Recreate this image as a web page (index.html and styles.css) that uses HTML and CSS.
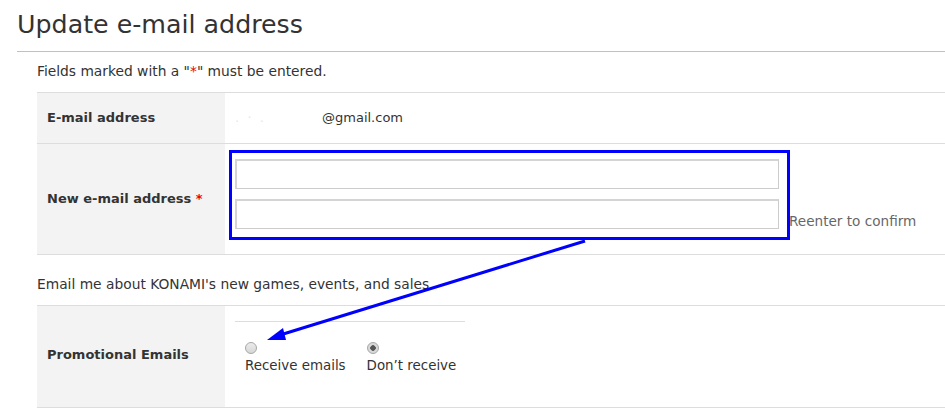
FILE: index.html
```html
<!DOCTYPE html>
<html lang="en">
<head>
  <meta charset="utf-8">
  <title>Update e-mail address</title>
  <link rel="stylesheet" href="styles.css">
</head>
<body>
  <main class="page">
    <h1 class="page-title">Update e-mail address</h1>
    <div class="content">
      <p class="note">Fields marked with a "<span class="req">*</span>" must be entered.</p>
      <table class="form-table">
        <tr class="row-current">
          <th>E-mail address</th>
          <td><span class="masked">. &nbsp;· &nbsp;.</span>@gmail.com</td>
        </tr>
        <tr class="row-new">
          <th>New e-mail address <span class="req">*</span></th>
          <td>
            <div class="field"><input type="text" class="text-input"></div>
            <div class="field"><input type="text" class="text-input"><span class="hint">Reenter to confirm</span></div>
          </td>
        </tr>
      </table>
      <p class="note note-promo">Email me about KONAMI's new games, events, and sales.</p>
      <table class="form-table">
        <tr class="row-promo">
          <th>Promotional Emails</th>
          <td>
            <div class="radio-group">
              <label class="radio-option">
                <input type="radio" name="promo" class="radio">
                <span>Receive emails</span>
              </label>
              <label class="radio-option">
                <input type="radio" name="promo" class="radio" checked>
                <span>Don’t receive</span>
              </label>
            </div>
          </td>
        </tr>
      </table>
    </div>
    <svg class="annotation" width="945" height="410" viewBox="0 0 945 410">
      <rect x="230.5" y="151.5" width="558" height="87" fill="none" stroke="#0000ff" stroke-width="3"/>
      <line x1="585" y1="241" x2="280" y2="335" stroke="#0000ff" stroke-width="3"/>
      <polygon points="267,340 283,328 286,340" fill="#0000ff"/>
    </svg>
  </main>
</body>
</html>
```

FILE: styles.css
```css
body {
  margin: 0;
  background-color: #ffffff;
  color: #333333;
  font-family: "DejaVu Sans", Verdana, sans-serif;
  font-size: 13px;
}
.page {
  position: relative;
  width: 945px;
  height: 410px;
  overflow: hidden;
  padding-left: 17px;
  box-sizing: border-box;
}
.page-title {
  margin: 0;
  padding: 8px 0 9px;
  font-size: 25.3px;
  font-weight: normal;
  line-height: 34px;
  border-bottom: 1px solid #c0c0c0;
}
.content {
  padding-left: 20px;
}
.note {
  margin: 0;
  height: 40px;
  line-height: 38px;
  font-size: 13.8px;
}
.note-promo {
  height: 50px;
  line-height: 58px;
}
.req {
  color: #ee0000;
}
.form-table {
  width: 100%;
  border-collapse: collapse;
  border-top: 1px solid #dddddd;
}
.form-table tr {
  border-bottom: 1px solid #dddddd;
}
.form-table th {
  width: 168px;
  padding: 0 10px;
  background-color: #f3f3f3;
  text-align: left;
  font-weight: bold;
}
.form-table td {
  padding: 0 10px;
}
.row-current th {
  height: 48px;
  padding-bottom: 2px;
}
.masked {
  display: inline-block;
  width: 87px;
  color: #e8e8e8;
}
.row-current td {
  padding-bottom: 2px;
}
.row-new th {
  padding-bottom: 2px;
}
.row-new td {
  padding-top: 15px;
  padding-bottom: 25px;
}
.field + .field {
  margin-top: 10px;
}
.text-input {
  width: 544px;
  height: 30px;
  box-sizing: border-box;
  border-style: solid;
  border-width: 2px 1px 1px 2px;
  border-color: #d4d4d4 #cccccc #cccccc #d4d4d4;
  vertical-align: bottom;
  margin: 0;
}
.hint {
  margin-left: 10px;
  color: #666666;
  font-size: 13.6px;
}
.row-promo th {
  height: 97px;
  padding-bottom: 4px;
}
.row-promo td {
  vertical-align: top;
  padding-top: 15px;
}
.radio-group {
  width: 230px;
  border-top: 1px solid #dddddd;
  padding: 20px 0 0 10px;
  box-sizing: border-box;
  display: flex;
  gap: 21px;
  font-size: 13.4px;
}
.radio-option {
  display: flex;
  flex-direction: column;
  align-items: flex-start;
}
.radio {
  appearance: none;
  width: 12px;
  height: 12px;
  margin: 0 0 4px 0;
  border: 1px solid #a8a8a8;
  border-radius: 50%;
  background: linear-gradient(#ececec, #d6d6d6);
}
.radio:checked {
  background: radial-gradient(circle, #555555 0 2.5px, #d8d8d8 3px);
}
.annotation {
  position: absolute;
  top: 0;
  left: 0;
  pointer-events: none;
}
```
